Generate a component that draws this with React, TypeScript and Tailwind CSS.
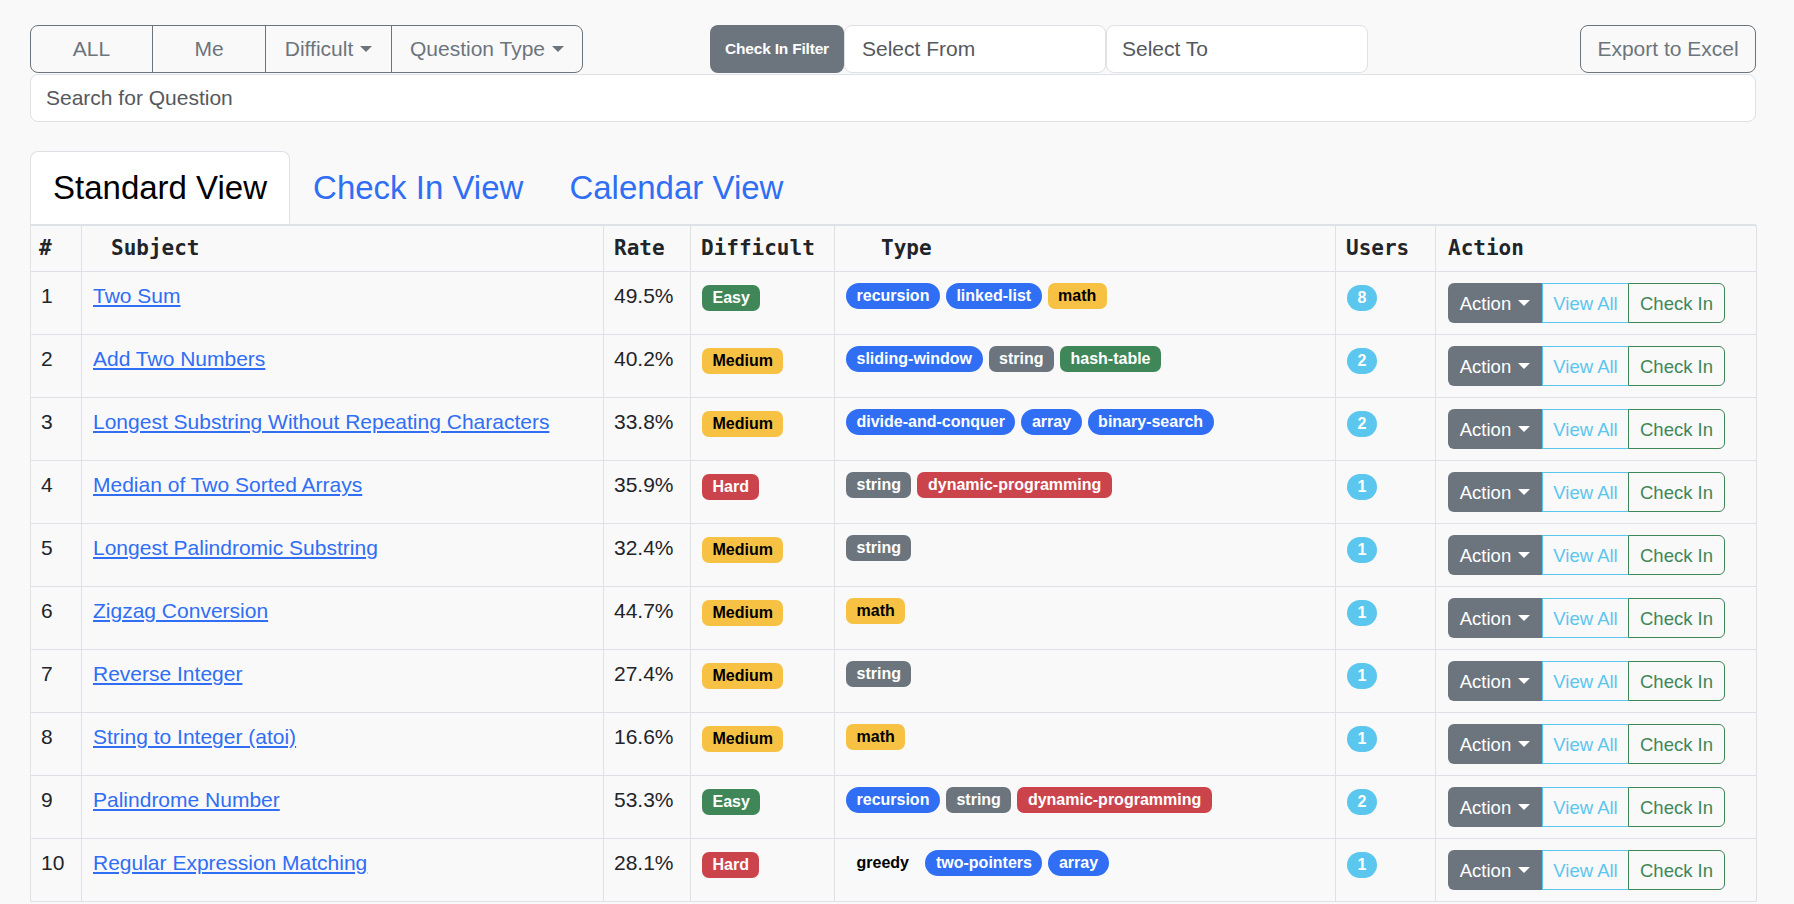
import React from "react";

type Tag = { name: string; kind: "blue" | "gray" | "yellow" | "green" | "red" | "light" };

type Row = {
  id: number;
  subject: string;
  rate: string;
  level: "Easy" | "Medium" | "Hard";
  tags: string[];
  users: number;
};

const TAG_KIND: Record<string, Tag["kind"]> = {
  recursion: "blue",
  "linked-list": "blue",
  "sliding-window": "blue",
  "divide-and-conquer": "blue",
  array: "blue",
  "binary-search": "blue",
  "two-pointers": "blue",
  string: "gray",
  math: "yellow",
  "hash-table": "green",
  "dynamic-programming": "red",
  greedy: "light",
};

const TAG_CLASS: Record<Tag["kind"], string> = {
  blue: "bg-[#306ef4] text-white rounded-full",
  gray: "bg-[#6c757d] text-white rounded-[7px]",
  yellow: "bg-[#f7c244] text-black rounded-[7px]",
  green: "bg-[#3f8758] text-white rounded-[7px]",
  red: "bg-[#cc444b] text-white rounded-[7px]",
  light: "bg-[#f8f9fa] text-black rounded-[7px]",
};

const LEVEL_CLASS: Record<Row["level"], string> = {
  Easy: "bg-[#3f8758] text-white",
  Medium: "bg-[#f7c244] text-black",
  Hard: "bg-[#cc444b] text-white",
};

const rows: Row[] = [
  { id: 1, subject: "Two Sum", rate: "49.5%", level: "Easy", tags: ["recursion", "linked-list", "math"], users: 8 },
  { id: 2, subject: "Add Two Numbers", rate: "40.2%", level: "Medium", tags: ["sliding-window", "string", "hash-table"], users: 2 },
  { id: 3, subject: "Longest Substring Without Repeating Characters", rate: "33.8%", level: "Medium", tags: ["divide-and-conquer", "array", "binary-search"], users: 2 },
  { id: 4, subject: "Median of Two Sorted Arrays", rate: "35.9%", level: "Hard", tags: ["string", "dynamic-programming"], users: 1 },
  { id: 5, subject: "Longest Palindromic Substring", rate: "32.4%", level: "Medium", tags: ["string"], users: 1 },
  { id: 6, subject: "Zigzag Conversion", rate: "44.7%", level: "Medium", tags: ["math"], users: 1 },
  { id: 7, subject: "Reverse Integer", rate: "27.4%", level: "Medium", tags: ["string"], users: 1 },
  { id: 8, subject: "String to Integer (atoi)", rate: "16.6%", level: "Medium", tags: ["math"], users: 1 },
  { id: 9, subject: "Palindrome Number", rate: "53.3%", level: "Easy", tags: ["recursion", "string", "dynamic-programming"], users: 2 },
  { id: 10, subject: "Regular Expression Matching", rate: "28.1%", level: "Hard", tags: ["greedy", "two-pointers", "array"], users: 1 },
];

function Caret({ color }: { color: string }) {
  return (
    <span
      className={`inline-block w-0 h-0 ml-[7px] border-x-[6px] border-x-transparent border-t-[6px] align-middle ${color}`}
    />
  );
}

const badge = "inline-block text-[16px] font-bold leading-none px-[10.5px] py-[5px]";

export default function App() {
  return (
    <div
      className="min-h-screen bg-[#f9f9f9] text-[#212529]"
      style={{ fontFamily: '"Liberation Sans", Arial, sans-serif' }}
    >
      <div className="ml-[30px] w-[1726px] pt-[25px]">
        {/* Filter bar */}
        <div className="flex items-center h-[48px]">
          <div className="flex h-[48px] border border-[#6c757d] rounded-[8px] text-[21px] text-[#6c757d]">
            <button className="w-[121px] flex items-center justify-center">ALL</button>
            <button className="w-[113px] flex items-center justify-center border-l border-[#6c757d]">Me</button>
            <button className="w-[126px] flex items-center justify-center border-l border-[#6c757d]">
              Difficult
              <Caret color="border-t-[#6c757d]" />
            </button>
            <button className="w-[191px] flex items-center justify-center border-l border-[#6c757d]">
              Question Type
              <Caret color="border-t-[#6c757d]" />
            </button>
          </div>

          <div className="flex h-[48px] ml-[127px]">
            <button className="w-[134px] bg-[#6c757d] text-white text-[15.5px] font-bold rounded-[8px] tracking-[-0.2px]">
              Check In Filter
            </button>
            <input
              placeholder="Select From"
              className="w-[262px] bg-white border border-[#dee2e6] rounded-[8px] px-[17px] text-[21px] placeholder:text-[#55595c] outline-none"
            />
            <input
              placeholder="Select To"
              className="w-[262px] bg-white border border-[#dee2e6] rounded-[8px] px-[15px] text-[21px] placeholder:text-[#55595c] outline-none"
            />
          </div>

          <button className="ml-auto w-[176px] h-[48px] border border-[#6c757d] rounded-[8px] text-[21px] text-[#6c757d]">
            Export to Excel
          </button>
        </div>

        <input
          placeholder="Search for Question"
          className="mt-[1px] w-full h-[48px] bg-white border border-[#dee2e6] rounded-[8px] px-[15px] text-[21px] placeholder:text-[#55595c] outline-none"
        />

        {/* Tabs */}
        <div className="mt-[29px] flex border-b border-[#dee2e6] text-[33px]">
          <div className="-mb-px h-[73px] px-[22px] flex items-center bg-white border border-[#dee2e6] border-b-white rounded-t-[8px] text-black">
            Standard View
          </div>
          <div className="h-[73px] px-[23px] flex items-center text-[#306ef4]">Check In View</div>
          <div className="h-[73px] px-[23px] flex items-center text-[#306ef4]">Calendar View</div>
        </div>

        {/* Table */}
        <table className="w-full table-fixed border-collapse">
          <colgroup>
            <col className="w-[51px]" />
            <col className="w-[522px]" />
            <col className="w-[87px]" />
            <col className="w-[144px]" />
            <col className="w-[501px]" />
            <col className="w-[100px]" />
            <col className="w-[321px]" />
          </colgroup>
          <thead>
            <tr
              className="h-[46px] text-[21px] font-bold text-[#212529]"
              style={{ fontFamily: '"DejaVu Sans Mono", monospace' }}
            >
              <th className="border border-[#dee2e6] px-[8px] text-left align-middle">#</th>
              <th className="border border-[#dee2e6] pl-[29px] text-left align-middle">Subject</th>
              <th className="border border-[#dee2e6] px-[10px] text-left align-middle">Rate</th>
              <th className="border border-[#dee2e6] px-[10px] text-left align-middle">Difficult</th>
              <th className="border border-[#dee2e6] pl-[46px] text-left align-middle">Type</th>
              <th className="border border-[#dee2e6] px-[10px] text-left align-middle">Users</th>
              <th className="border border-[#dee2e6] px-[12px] text-left align-middle">Action</th>
            </tr>
          </thead>
          <tbody className="text-[21px] leading-[25px]">
            {rows.map((r) => (
              <tr key={r.id}>
                <td className="border border-[#dee2e6] px-[10px] py-[11px] align-top">{r.id}</td>
                <td className="border border-[#dee2e6] px-[11px] py-[11px] align-top">
                  <a href="#" className="text-[#306ef4] underline">
                    {r.subject}
                  </a>
                </td>
                <td className="border border-[#dee2e6] px-[10px] py-[11px] align-top">{r.rate}</td>
                <td className="border border-[#dee2e6] px-[11px] py-[11px] align-top">
                  <span className={`${badge} rounded-[7px] ${LEVEL_CLASS[r.level]}`}>{r.level}</span>
                </td>
                <td className="border border-[#dee2e6] px-[11px] py-[11px] align-top">
                  <div className="flex flex-wrap gap-[6px]">
                    {r.tags.map((t) => (
                      <span key={t} className={`${badge} ${TAG_CLASS[TAG_KIND[t]]}`}>
                        {t}
                      </span>
                    ))}
                  </div>
                </td>
                <td className="border border-[#dee2e6] px-[11px] py-[11px] align-top">
                  <span className={`${badge} rounded-full bg-[#5bc6ee] text-white`}>{r.users}</span>
                </td>
                <td className="border border-[#dee2e6] px-[12px] py-[11px] align-top">
                  <div className="flex h-[40px] text-[18.5px]">
                    <button className="w-[94px] flex items-center justify-center bg-[#6c757d] text-white rounded-l-[6px]">
                      Action
                      <Caret color="border-t-white" />
                    </button>
                    <button className="w-[87px] flex items-center justify-center border border-[#5bc6ee] text-[#5bc6ee]">
                      View All
                    </button>
                    <button className="w-[97px] flex items-center justify-center border border-[#3f8758] -ml-px text-[#3f8758] rounded-r-[6px]">
                      Check In
                    </button>
                  </div>
                </td>
              </tr>
            ))}
          </tbody>
        </table>
      </div>
    </div>
  );
}
